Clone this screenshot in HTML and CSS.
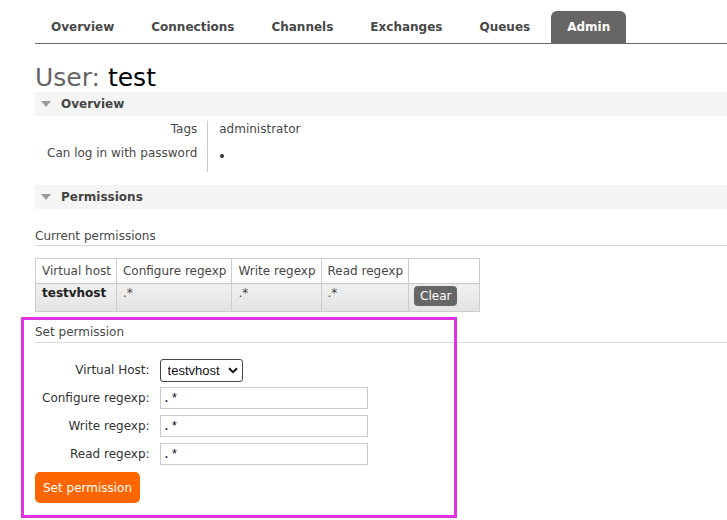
FILE: index.html
```html
<!DOCTYPE html>
<html>
<head>
<meta charset="utf-8">
<title>User: test</title>
<link rel="stylesheet" href="styles.css">
</head>
<body>
<nav class="menu">
  <ul>
    <li><a href="#">Overview</a></li>
    <li><a href="#">Connections</a></li>
    <li><a href="#">Channels</a></li>
    <li><a href="#">Exchanges</a></li>
    <li><a href="#">Queues</a></li>
    <li><a href="#" class="active">Admin</a></li>
  </ul>
</nav>
<main class="main">
  <h1 class="title">User: <b>test</b></h1>

  <section class="section">
    <h2 class="section-head"><span class="tri"></span>Overview</h2>
    <table class="facts">
      <tr><th>Tags</th><td>administrator</td></tr>
      <tr><th>Can log in with password</th><td><span class="dot" title="yes"></span></td></tr>
    </table>
  </section>

  <section class="section">
    <h2 class="section-head"><span class="tri"></span>Permissions</h2>
    <h3 class="sub">Current permissions</h3>
    <table class="list">
      <thead>
        <tr><th>Virtual host</th><th>Configure regexp</th><th>Write regexp</th><th>Read regexp</th><th class="col-act"></th></tr>
      </thead>
      <tbody>
        <tr class="alt"><td class="vhost">testvhost</td><td>.*</td><td>.*</td><td>.*</td><td><button class="btn-clear" type="button">Clear</button></td></tr>
      </tbody>
    </table>

    <h3 class="sub sub-set">Set permission</h3>
    <form class="perm-form">
      <table class="form">
        <tr><th>Virtual Host:</th><td><span class="select-wrap"><select class="select"><option>testvhost</option></select><svg class="chev" width="10" height="7" viewBox="0 0 10 7"><path d="M1 1.2 L5 5.2 L9 1.2" fill="none" stroke="#111" stroke-width="2"/></svg></span></td></tr>
        <tr><th>Configure regexp:</th><td><input class="field" type="text" value=".*"></td></tr>
        <tr><th>Write regexp:</th><td><input class="field" type="text" value=".*"></td></tr>
        <tr><th>Read regexp:</th><td><input class="field" type="text" value=".*"></td></tr>
      </table>
      <button class="btn-submit" type="button">Set permission</button>
    </form>
  </section>
</main>
<div class="highlight"></div>
</body>
</html>
```
FILE: styles.css
```css
html, body {
  background: #fff;
}
body {
  margin: 0;
  font-family: "DejaVu Sans", Verdana, sans-serif;
  font-size: 12px;
  color: #484848;
  position: relative;
  min-height: 520px;
  overflow: hidden;
}

/* navigation */
.menu {
  padding: 11px 0 0 35px;
}
.menu ul {
  list-style: none;
  margin: 0;
  padding: 0;
  display: flex;
  gap: 5px;
  border-bottom: 1px solid #6a6a6a;
}
.menu a {
  display: block;
  height: 31px;
  line-height: 31px;
  padding: 1px 16px 0;
  font-weight: bold;
  color: #484848;
  text-decoration: none;
  border-radius: 6px 6px 0 0;
}
.menu a.active {
  background: #666;
  color: #fff;
}

/* main */
.main {
  padding-left: 35px;
}
.title {
  margin: 19px 0 0;
  font-size: 25px;
  line-height: 29px;
  font-weight: normal;
  color: #666;
}
.title b {
  font-weight: normal;
  color: #000;
}

.section-head {
  margin: 0;
  height: 24px;
  display: flex;
  align-items: center;
  padding-left: 6px;
  background: #f5f5f5;
  font-size: 12px;
  font-weight: bold;
  color: #444;
}
.tri {
  width: 0;
  height: 0;
  border-left: 5px solid transparent;
  border-right: 5px solid transparent;
  border-top: 6px solid #999;
  margin-right: 10px;
}

/* overview facts */
.facts {
  border-collapse: collapse;
  margin: 5px 0 13px;
}
.facts th, .facts td {
  line-height: 16px;
  padding: 0 0 8px;
  vertical-align: top;
}
.facts th {
  font-weight: normal;
  text-align: right;
  padding-left: 12px;
  padding-right: 10px;
}
.facts td {
  border-left: 1px solid #ccc;
  padding-left: 11px;
}
.facts tr:last-child th, .facts tr:last-child td {
  padding-bottom: 11px;
}
.dot {
  display: inline-block;
  width: 4px;
  height: 4px;
  margin-left: 1px;
  border-radius: 50%;
  background: #333;
  vertical-align: -1px;
}

/* sub headings */
.sub {
  margin: 19px 0 0;
  font-size: 12px;
  font-weight: normal;
  line-height: 16px;
  padding-bottom: 1px;
  border-bottom: 1px solid #ddd;
  color: #484848;
}
.sub-set {
  margin-top: 12px;
  padding-bottom: 2px;
}

/* permissions list */
.list {
  margin-top: 12px;
  border-collapse: collapse;
}
.list th, .list td {
  border: 1px solid #ccc;
  text-align: left;
  line-height: 16px;
  white-space: nowrap;
}
.list th {
  font-weight: normal;
  padding: 4px 5px 4px 6px;
  background: #fff;
}
.list th.col-act {
  width: 59px;
}
.list td {
  padding: 1px 5px 0 6px;
  vertical-align: top;
}
.list tr.alt td {
  background: linear-gradient(#f0f0f0, #e3e3e3);
}
.list td.vhost {
  font-weight: bold;
  color: #222;
}
.btn-clear {
  display: block;
  margin: 1px 0 5px -1px;
  height: 20px;
  padding: 0 6px;
  border: none;
  border-radius: 4px;
  background: #666;
  color: #fff;
  font-family: "DejaVu Sans", Verdana, sans-serif;
  font-size: 12px;
  line-height: 20px;
}

/* set permission form */
.perm-form {
  margin-top: 13px;
}
.form {
  border-collapse: collapse;
}
.form th, .form td {
  height: 28px;
  padding: 0;
  vertical-align: middle;
}
.form th {
  font-weight: normal;
  text-align: right;
  padding-left: 7px;
  padding-right: 10px;
  color: #333;
  white-space: nowrap;
}
.select-wrap {
  position: relative;
  display: inline-block;
  vertical-align: middle;
}
.select {
  -webkit-appearance: none;
  appearance: none;
  width: 83px;
  height: 23px;
  box-sizing: border-box;
  border: 1px solid #444;
  border-radius: 3px;
  background: #fff;
  padding: 0 0 0 7px;
  font-family: "Liberation Sans", Arial, sans-serif;
  font-size: 13px;
  color: #111;
  display: block;
}
.chev {
  position: absolute;
  right: 5px;
  top: 8px;
  pointer-events: none;
}
.field {
  display: block;
  width: 208px;
  height: 22px;
  box-sizing: border-box;
  border: 1px solid #ccc;
  padding: 0 2px;
  margin: 0;
  font-family: "Liberation Mono", "Courier New", monospace;
  font-size: 13px;
  color: #111;
}
.btn-submit {
  display: block;
  margin-top: 4px;
  height: 31px;
  padding: 0 8px;
  border: none;
  border-radius: 5px;
  background: #f60;
  color: #fff;
  font-family: "DejaVu Sans", Verdana, sans-serif;
  font-size: 12px;
}

/* annotation overlay */
.highlight {
  position: absolute;
  left: 21px;
  top: 317px;
  width: 436px;
  height: 201px;
  box-sizing: border-box;
  border: 3px solid #e233e2;
  pointer-events: none;
}
```
